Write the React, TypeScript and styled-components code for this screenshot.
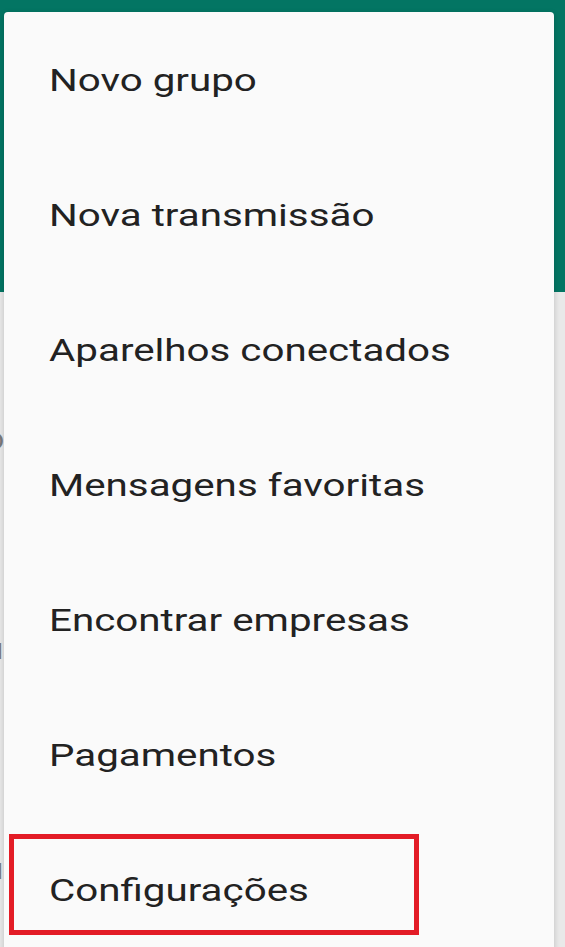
import React from "react";
import styled, { createGlobalStyle } from "styled-components";

const Global = createGlobalStyle`
  html, body { margin: 0; padding: 0; }
  body { font-family: Roboto, "Noto Sans", sans-serif; background: #ebebeb; overflow: hidden; }
`;

const Screen = styled.div`
  position: relative;
  width: 565px;
  height: 947px;
  overflow: hidden;
  background: #e9e9e9;
`;

const Header = styled.div`
  height: 292px;
  background: #037563;
`;

const ChatList = styled.div`
  display: flex;
  flex-direction: column;
  padding-top: 130px;
  margin-left: -30px;
`;

const Fragment = styled.div<{ $dark?: boolean; $gap: number }>`
  font-size: 30px;
  color: ${(p) => (p.$dark ? "#222" : "#7a7a7a")};
  line-height: 34px;
  margin-bottom: ${(p) => p.$gap}px;
`;

const Menu = styled.ul`
  position: absolute;
  top: 12px;
  left: 4px;
  width: 550px;
  margin: 0;
  padding: 0;
  list-style: none;
  background: #fafafa;
  border-radius: 4px;
  box-shadow: 0 2px 6px rgba(0, 0, 0, 0.18);
`;

const Item = styled.li`
  position: relative;
  height: 135px;
  display: flex;
  align-items: center;
  padding-left: 45px;
  font-size: 32px;
  font-weight: 400;
  color: #222;
`;

const Label = styled.span`
  display: inline-block;
  transform: scaleX(1.26);
  transform-origin: left center;
  white-space: nowrap;
`;

const Highlight = styled.span`
  position: absolute;
  left: 5px;
  top: 12px;
  width: 410px;
  height: 101px;
  box-sizing: border-box;
  border: 5px solid #e31c26;
  pointer-events: none;
`;

const items = [
  "Novo grupo",
  "Nova transmissão",
  "Aparelhos conectados",
  "Mensagens favoritas",
  "Encontrar empresas",
  "Pagamentos",
  "Configurações",
];

export default function App() {
  return (
    <Screen>
      <Global />
      <Header />
      <ChatList>
        <Fragment $gap={106}>oo</Fragment>
        <Fragment $dark $gap={36}>rr</Fragment>
        <Fragment $gap={186}>uu</Fragment>
        <Fragment $gap={0}>uu</Fragment>
      </ChatList>
      <Menu>
        {items.map((label, i) => (
          <Item key={label}>
            <Label>{label}</Label>
            {i === items.length - 1 && <Highlight />}
          </Item>
        ))}
      </Menu>
    </Screen>
  );
}
